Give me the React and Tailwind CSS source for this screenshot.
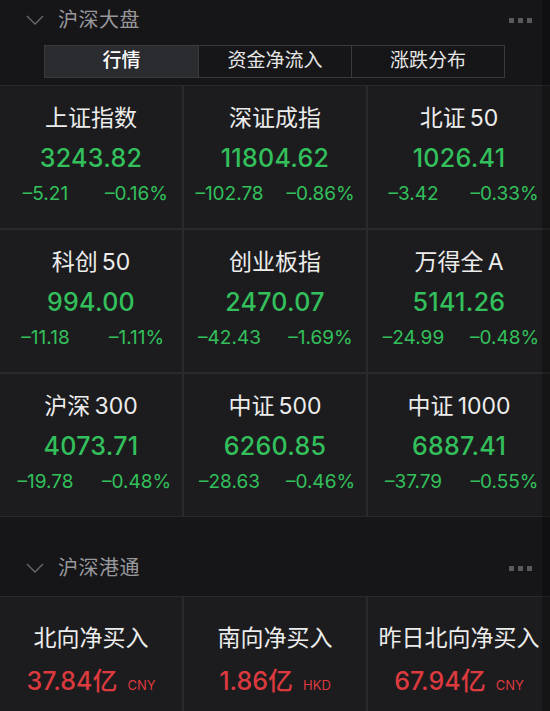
import React from 'react';

const FONT = { fontFamily: 'Inter, "Noto Sans CJK SC", sans-serif' };

const indices = [
  { name: '上证指数', value: '3243.82', chg: '–5.21', pct: '–0.16%' },
  { name: '深证成指', value: '11804.62', chg: '–102.78', pct: '–0.86%' },
  { name: '北证\u200950', value: '1026.41', chg: '–3.42', pct: '–0.33%' },
  { name: '科创\u200950', value: '994.00', chg: '–11.18', pct: '–1.11%' },
  { name: '创业板指', value: '2470.07', chg: '–42.43', pct: '–1.69%' },
  { name: '万得全\u2009A', value: '5141.26', chg: '–24.99', pct: '–0.48%' },
  { name: '沪深\u2009300', value: '4073.71', chg: '–19.78', pct: '–0.48%' },
  { name: '中证\u2009500', value: '6260.85', chg: '–28.63', pct: '–0.46%' },
  { name: '中证\u20091000', value: '6887.41', chg: '–37.79', pct: '–0.55%' },
];

const flows = [
  { name: '北向净买入', value: '37.84亿', unit: 'CNY' },
  { name: '南向净买入', value: '1.86亿', unit: 'HKD' },
  { name: '昨日北向净买入', value: '67.94亿', unit: 'CNY' },
];

const tabs = ['行情', '资金净流入', '涨跌分布'];

function SectionHeader({ title }) {
  return (
    <div className="flex items-center h-10 pl-[26px] pr-[18px]">
      <svg width="18" height="10" viewBox="0 0 18 10" fill="none" className="shrink-0">
        <path d="M1 1l8 8 8-8" stroke="#6a6a6e" strokeWidth="1.3" />
      </svg>
      <span className="ml-[14px] text-[20px] text-[#98989c] tracking-[0.5px]">{title}</span>
      <div className="ml-auto flex gap-[4px]">
        <span className="w-[5px] h-[5px] bg-[#5a5a5e]" />
        <span className="w-[5px] h-[5px] bg-[#5a5a5e]" />
        <span className="w-[5px] h-[5px] bg-[#5a5a5e]" />
      </div>
    </div>
  );
}

function IndexCell({ item }) {
  return (
    <div className="bg-[#1c1c1e] h-[142px] flex flex-col items-center">
      <div className="mt-[18px] text-[23px] leading-[28px] text-[#ececec]">{item.name}</div>
      <div className="mt-[11px] text-[25px] leading-[30px] font-medium text-[#33c05c] tracking-[0.3px]">{item.value}</div>
      <div className="mt-[10px] grid grid-cols-2 w-full text-[19px] leading-[22px] text-[#33c05c]">
        <span className="text-center">{item.chg}</span>
        <span className="text-center">{item.pct}</span>
      </div>
    </div>
  );
}

function FlowCell({ item }) {
  return (
    <div className="bg-[#1c1c1e] h-[122px] flex flex-col items-center">
      <div className="mt-[27px] text-[23px] leading-[28px] text-[#ececec]">{item.name}</div>
      <div className="mt-[14px] flex items-baseline text-[#dc3a3f]">
        <span className="text-[25px] leading-[30px] font-medium">{item.value}</span>
        <span className="ml-[10px] text-[13px]">{item.unit}</span>
      </div>
    </div>
  );
}

export default function App() {
  return (
    <div className="relative w-[550px] h-[711px] overflow-hidden bg-[#161618]" style={FONT}>
      <SectionHeader title="沪深大盘" />
      <div className="mt-[5px] ml-[44px] w-[461px] h-[33px] grid grid-cols-3 border border-[#3a3a3c]">
        {tabs.map((t, i) => (
          <div
            key={t}
            className={
              i === 0
                ? 'flex items-center justify-center bg-[#2b2c2f] text-white text-[19px] font-medium'
                : 'flex items-center justify-center border-l border-[#3a3a3c] text-[#e6e6e6] text-[19px]'
            }
          >
            {t}
          </div>
        ))}
      </div>
      <div className="mt-[7px] grid grid-cols-3 gap-[2px] bg-[#2a2a2c] border-y border-[#2a2a2c]">
        {indices.map((it) => (
          <IndexCell key={it.name} item={it} />
        ))}
      </div>
      <div className="mt-[31px]">
        <SectionHeader title="沪深港通" />
      </div>
      <div className="mt-[8px] grid grid-cols-3 gap-[2px] bg-[#2a2a2c] border-t border-[#2a2a2c]">
        {flows.map((it) => (
          <FlowCell key={it.name} item={it} />
        ))}
      </div>
      <div className="absolute top-0 right-0 w-[8px] h-full bg-black/25 pointer-events-none" />
    </div>
  );
}
